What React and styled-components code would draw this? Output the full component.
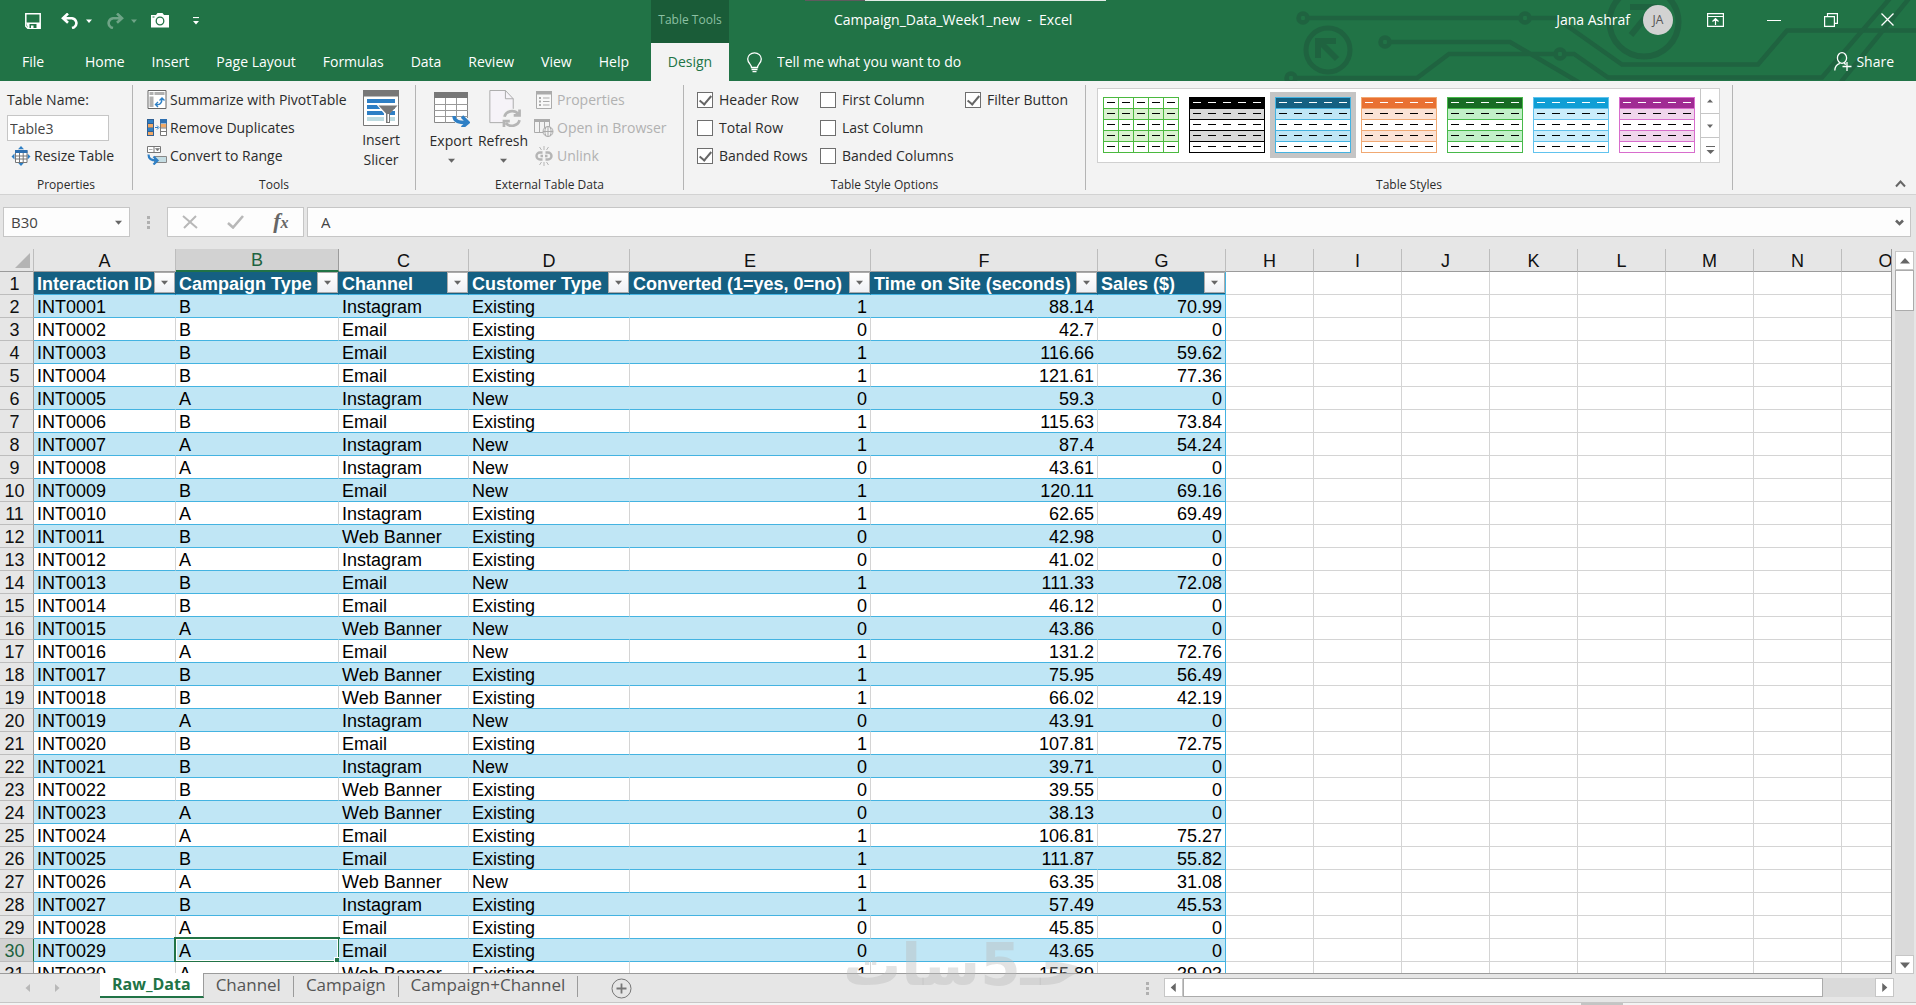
import { useState } from "react";
import styled, { createGlobalStyle, ThemeProvider } from "styled-components";

const theme = {
    colors: {
        brand: "#217346",
        brandDark: "#1a5c38",
        ribbon: "#f3f3f3",
        chrome: "#e6e6e6",
        line: "#c6c6c6",
        grid: "#d4d4d4",
        tableLine: "#44b3e1",
        band: "#c0e6f5",
        tableHead: "#156082",
        text: "#2b2b2b",
        muted: "#b1b1b1",
    },
    fonts: {
        ui: `"Open Sans", "Noto Sans", sans-serif`,
        cell: `"Liberation Sans", Arial, sans-serif`,
    },
};

const GlobalStyle = createGlobalStyle`
    * { box-sizing: border-box; }
    body { margin: 0; background: #e6e6e6; }
    button, input { font: inherit; color: inherit; margin: 0; }
    button { border: 0; padding: 0; background: none; white-space: nowrap; }
    svg { display: block; flex: none; }
`;

const Window = styled.div`
    display: flex;
    flex-direction: column;
    height: 100vh;
    overflow: hidden;
    position: relative;
    font-family: ${props => props.theme.fonts.ui};
    font-size: 14px;
    line-height: 20px;
    color: ${props => props.theme.colors.text};
    background: ${props => props.theme.colors.chrome};
`;

/* ---------- title bar and tabs ---------- */

const Header = styled.header`
    position: relative;
    display: flex;
    flex: none;
    height: 81px;
    color: #fff;
    background: ${props => props.theme.colors.brand};
    overflow: hidden;
`;
const Circuit = styled.svg`
    position: absolute;
    top: 0;
    right: 0;
`;
const WindowEdge = styled.div`
    position: absolute;
    top: 0;
    left: 42%;
    width: 301px;
    height: 1px;
    background: linear-gradient(to right, #5f5a5e 60px, #e3ebe6 60px);
`;
const HeaderColumn = styled.div`
    position: relative;
    display: flex;
    flex-direction: column;
    flex: ${props => props.grow ? 1 : "none"};
`;
const QuickAccess = styled.div`
    display: flex;
    align-items: center;
    gap: 14px;
    height: 43px;
    padding: 0 0 2px 25px;
`;
const QuickButton = styled.button`
    display: flex;
    align-items: center;
    gap: 7px;
    width: ${props => props.width};
    opacity: ${props => props.disabled ? 0.35 : 1};
`;
const TabList = styled.nav`
    display: flex;
    gap: 27px;
    height: 38px;
    padding: 0 22px;
`;
const Tab = styled.button`
    text-align: left;
    min-width: ${props => props.first ? "36px" : 0};
`;
const ContextTab = styled.div`
    position: relative;
    display: flex;
    flex-direction: column;
    flex: none;
    width: 78px;
    text-align: center;
`;
const ContextTitle = styled.div`
    height: 43px;
    padding-top: 10px;
    font-size: 12px;
    color: #8cc0a3;
    background: ${props => props.theme.colors.brandDark};
`;
const ActiveTab = styled.button`
    height: 38px;
    color: ${props => props.theme.colors.brand};
    background: ${props => props.theme.colors.ribbon};
`;
const TitleRow = styled.div`
    display: flex;
    align-items: center;
    height: 43px;
    padding: 0 22px 4px 105px;
`;
const DocTitle = styled.div`
    flex: 1;
    white-space: pre;
`;
const Avatar = styled.span`
    display: grid;
    place-items: center;
    width: 30px;
    height: 30px;
    margin: 0 34px 0 13px;
    border-radius: 50%;
    font-size: 12px;
    color: #555;
    background: #d2d2d2;
`;
const WindowButtons = styled.div`
    display: flex;
    align-items: center;
    gap: 43px;
`;
const TellRow = styled.div`
    display: flex;
    align-items: center;
    height: 38px;
    padding: 0 22px 0 17px;
`;
const TellMe = styled.input`
    flex: 1;
    margin-left: 12px;
    padding: 0 2px;
    border: 0;
    background: none;
    outline: 0;
    &::placeholder { color: #fff; opacity: 1; }
`;
const ShareButton = styled.button`
    display: flex;
    align-items: center;
    gap: 4px;
`;

/* ---------- ribbon ---------- */

const Ribbon = styled.section`
    display: flex;
    flex: none;
    height: 114px;
    padding: 4px 0;
    border-bottom: 1px solid #d2d2d2;
    background: ${props => props.theme.colors.ribbon};
`;
const Group = styled.div`
    display: flex;
    flex-direction: column;
    justify-content: space-between;
    flex: none;
    width: ${props => props.width}px;
    border-right: 1px solid #b4b4b4;
`;
const GroupBody = styled.div`
    display: flex;
    padding-left: ${props => props.inset}px;
`;
const GroupLabel = styled.div`
    line-height: 10px;
    font-size: 12px;
    text-align: center;
`;
const Stack = styled.div`
    display: flex;
    flex-direction: column;
    align-items: flex-start;
    margin-left: ${props => props.before || 0}px;
    width: ${props => props.width ? `${props.width}px` : "auto"};
`;
const Command = styled.button`
    display: flex;
    align-items: center;
    gap: 3px;
    height: 28px;
    padding-top: 1px;
    color: ${props => props.disabled ? props.theme.colors.muted : "inherit"};
    svg { width: 20px; }
`;
const BigCommand = styled.button`
    display: flex;
    flex-direction: column;
    align-items: center;
    width: ${props => props.width}px;
    padding-top: 5px;
    svg + span { margin-top: 4px; }
    span + svg { margin-top: 6px; }
`;
const FieldLabel = styled.label`
    height: 30px;
    line-height: 30px;
`;
const NameField = styled.input`
    width: 102px;
    height: 26px;
    padding: 0 2px;
    border: 1px solid ${props => props.theme.colors.line};
    color: #444;
    background: #fff;
`;
const ResizeCommand = styled(Command)`
    margin-left: 4px;
`;
const CheckLabel = styled.label`
    display: flex;
    align-items: center;
    gap: 6px;
    height: 28px;
    padding-top: 1px;
    white-space: nowrap;
`;
const CheckBox = styled.input`
    appearance: none;
    display: grid;
    place-items: center;
    width: 16px;
    height: 16px;
    border: 1px solid #6e6e6e;
    background: #fff;
    &:checked::after {
        content: "";
        width: 5px;
        height: 10px;
        margin-bottom: 3px;
        border: solid #666;
        border-width: 0 2px 2px 0;
        transform: rotate(40deg);
    }
`;
const Gallery = styled.div`
    display: flex;
    width: 623px;
    height: 75px;
    margin-top: 3px;
    border: 1px solid #d0d0d0;
    background: #fff;
`;
const GalleryItems = styled.div`
    display: flex;
    flex: 1;
    align-items: flex-start;
    padding-top: 3px;
`;
const Swatch = styled.button`
    display: grid;
    place-items: center;
    width: 86px;
    height: 66px;
    background: ${props => props.active ? "#c5c5c5" : "none"};
`;
const GalleryScroll = styled.div`
    display: flex;
    flex-direction: column;
    width: 19px;
    button {
        flex: 1;
        display: grid;
        place-items: center;
        border-left: 1px solid ${props => props.theme.colors.line};
    }
    button + button { border-top: 1px solid ${props => props.theme.colors.line}; }
`;
const RibbonEnd = styled.div`
    display: flex;
    flex: 1;
    justify-content: flex-end;
    align-items: flex-end;
    padding: 0 10px 2px 0;
`;

/* ---------- formula bar ---------- */

const FormulaBar = styled.div`
    display: flex;
    flex: none;
    align-items: center;
    height: 54px;
    padding: 0 5px 0 3px;
`;
const BarBox = styled.div`
    display: flex;
    align-items: center;
    justify-content: space-around;
    flex: ${props => props.width ? "none" : 1};
    width: ${props => props.width ? `${props.width}px` : "auto"};
    height: 30px;
    margin-right: ${props => props.after || 0}px;
    padding: 0 ${props => props.inset || 0}px;
    border: 1px solid ${props => props.theme.colors.line};
    background: #fdfdfd;
`;
const BarInput = styled.input`
    flex: 1;
    min-width: 0;
    padding: 0 0 0 ${props => props.inset || 0}px;
    border: 0;
    outline: 0;
    font-size: 15px;
    color: #444;
    background: none;
`;
const Grip = styled.div`
    align-self: center;
    flex: none;
    width: 3px;
    height: 13px;
    margin: 0 ${props => props.space}px;
    background: repeating-linear-gradient(#b0b0b0 0 3px, transparent 3px 5px);
`;
const Fx = styled.span`
    font-family: "Liberation Serif", serif;
    font-size: 22px;
    font-style: italic;
    font-weight: bold;
    color: #666;
    small { font-size: 16px; }
`;

/* ---------- sheet ---------- */

const SheetArea = styled.main`
    display: flex;
    flex: 1;
    min-height: 0;
`;
const SheetView = styled.div`
    flex: 1;
    min-width: 0;
    overflow: hidden;
    border-right: 1px solid #9b9b9b;
    border-bottom: 1px solid #9b9b9b;
`;
const Sheet = styled.table`
    table-layout: fixed;
    width: 1930px;
    border-collapse: separate;
    border-spacing: 0;
    font-family: ${props => props.theme.fonts.cell};
    font-size: 18px;
    line-height: 20px;
    color: #000;
    tr { height: 23px; }
`;
const ColumnHead = styled.th`
    height: 23px;
    padding: 2px 0 0;
    line-height: 19px;
    font-weight: normal;
    color: ${props => props.active ? "#1d6340" : "#111"};
    background: ${props => props.active ? "#d2d2d2" : props.theme.colors.chrome};
    border-right: 1px solid ${props => props.active ? "#9b9b9b" : "#bdbdbd"};
    border-bottom: ${props => props.active ? `2px solid ${props.theme.colors.brand}` : "1px solid #9b9b9b"};
`;
const Corner = styled(ColumnHead)`
    padding: 3px 3px 3px 15px;
`;
const RowHead = styled.th`
    padding: 2px 4px 0 0;
    font-weight: normal;
    color: ${props => props.active ? "#1d6340" : "#111"};
    background: ${props => props.active ? "#d2d2d2" : props.theme.colors.chrome};
    border-right: 1px solid ${props => props.active ? props.theme.colors.brand : "#9b9b9b"};
    border-bottom: 1px solid #bdbdbd;
`;
const Cell = styled.td`
    position: relative;
    padding: 2px 3px 0;
    white-space: nowrap;
    text-align: ${props => props.numeric ? "right" : "left"};
    background: ${props => props.band ? props.theme.colors.band : "#fff"};
    border-bottom: 1px solid ${props => props.theme.colors.tableLine};
    border-right: 1px solid ${props => props.last ? props.theme.colors.tableLine : props.band ? props.theme.colors.band : props.theme.colors.grid};
`;
const EmptyCell = styled.td`
    padding: 0;
    background: #fff;
    border-right: 1px solid ${props => props.theme.colors.grid};
    border-bottom: 1px solid ${props => props.theme.colors.grid};
`;
const FieldCell = styled.th`
    padding: 0;
    color: #fff;
    background: ${props => props.theme.colors.tableHead};
    border-bottom: 1px solid ${props => props.theme.colors.tableLine};
    border-right: 1px solid ${props => props.last ? props.theme.colors.tableLine : props.theme.colors.tableHead};
`;
const FieldInner = styled.div`
    display: flex;
    justify-content: space-between;
    padding-left: 3px;
    height: 22px;
    white-space: nowrap;
    span { min-width: 0; padding-top: 2px; }
`;
const FilterButton = styled.button`
    display: grid;
    place-items: center;
    flex: none;
    width: 21px;
    height: 21px;
    border: 1px solid #ababab;
    background: linear-gradient(#fff, #eef0f4);
`;
const Selection = styled.div`
    position: absolute;
    inset: -2px;
    border: 2px solid ${props => props.theme.colors.brand};
    box-shadow: inset 0 0 0 1px #fff;
    &::after {
        content: "";
        position: absolute;
        right: -3px;
        bottom: -3px;
        width: 6px;
        height: 6px;
        border: solid #fff;
        border-width: 1px 0 0 1px;
        background: ${props => props.theme.colors.brand};
    }
`;
const Scroller = styled.div`
    display: flex;
    flex: 0 1 730px;
    height: 19px;
    margin: 4px 22px 0 0;
    background: #dadada;
`;
const SideScroller = styled.div`
    display: flex;
    flex-direction: column;
    flex: none;
    width: 19px;
    margin: 2px 2px 0 3px;
    background: #dadada;
`;
const ScrollButton = styled.button`
    display: grid;
    place-items: center;
    flex: none;
    width: 19px;
    height: 19px;
    border: 1px solid ${props => props.theme.colors.line};
    background: #fff;
`;
const Thumb = styled.div`
    flex: none;
    width: ${props => props.vertical ? "19px" : "640px"};
    height: ${props => props.vertical ? "41px" : "19px"};
    border: 1px solid #ababab;
    background: #fff;
`;
const Spacer = styled.div`
    flex: 1;
`;

/* ---------- sheet tabs ---------- */

const BottomBar = styled.footer`
    display: flex;
    flex: none;
    height: 29px;
    border-bottom: 1px solid ${props => props.theme.colors.line};
    font-size: 17px;
`;
const SheetNav = styled.div`
    display: flex;
    gap: 21px;
    align-items: center;
    width: 100px;
    padding-left: 24px;
`;
const SheetTab = styled.button`
    position: relative;
    height: ${props => props.active ? "25px" : "21px"};
    margin-top: ${props => props.active ? "-1px" : "2px"};
    padding: 0 12px ${props => props.active ? 1 : 4}px;
    line-height: 17px;
    font-size: ${props => props.active ? 16 : 17}px;
    font-weight: ${props => props.active ? "bold" : "normal"};
    color: ${props => props.active ? props.theme.colors.brand : "#555"};
    background: ${props => props.active ? "#fff" : "none"};
    border: solid #9b9b9b;
    border-width: 0 1px 0 0;
    ${props => props.active && `border-bottom: 2px solid ${props.theme.colors.brand};`}
`;
const AddSheet = styled.button`
    margin-left: 33px;
`;
const StatusStrip = styled.div`
    flex: none;
    height: 2px;
    background: #f3f3f3;
`;
const StatusMark = styled.div`
    width: 42px;
    height: 2px;
    margin-left: auto;
    margin-right: 293px;
    background: #c3c5c4;
`;
const Watermark = styled.div`
    position: absolute;
    left: 44%;
    bottom: 10px;
    direction: rtl;
    font-family: "DejaVu Sans", sans-serif;
    font-weight: bold;
    font-size: 58px;
    line-height: 60px;
    color: rgba(185, 185, 185, 0.4);
    pointer-events: none;
`;

/* ---------- icons ---------- */

const Caret = ({ size = 7, color = "#666", dir = "down" }) => {
    const turn = { down: 0, up: 180, left: 90, right: 270 }[dir];
    return <svg width={size} height={size} viewBox="0 0 8 8"><path d="M0 2h8L4 6.500z" fill={color} transform={`rotate(${turn} 4 4)`} /></svg>
}
const SaveIcon = () => <svg width="16" height="16" viewBox="0 0 16 16" fill="none" stroke="#fff" strokeWidth="1.500">
    <path d="M.8.800h14.400v14.400H2.800l-2-2z" />
    <path d="M1 9.500h14V15H3z" fill="#fff" stroke="none" /><path d="M4.500 11h7v4h-7z" fill="#217346" stroke="none" /><path d="M6 12.500h2.500V16H6z" fill="#fff" stroke="none" />
</svg>
const UndoIcon = ({ flip }) => <svg width="18" height="16" viewBox="0 0 18 16" fill="none" stroke="#fff" strokeWidth="2.600">
    <g transform={flip ? "translate(18 0) scale(-1 1)" : ""}><path d="M7 .5L2 5.200l5 4.600M2.500 5.200h8.500a5 5 0 0 1 2 9.200l-2 .6" /></g>
</svg>
const CameraIcon = () => <svg width="18" height="15" viewBox="0 0 18 15">
    <path d="M0 2h5l1.500-2h5L13 2h5v12.500H0z" fill="#fff" /><circle cx="9" cy="8" r="3.800" fill="none" stroke="#217346" strokeWidth="1.300" /><path d="M1.500 4h2" stroke="#217346" />
</svg>
const CustomizeIcon = () => <svg width="6" height="8" viewBox="0 0 6 8"><path d="M0 .5h6" stroke="#fff" strokeWidth="1.200" /><path d="M0 4h6L3 7.500z" fill="#fff" /></svg>
const BulbIcon = () => <svg width="17" height="21" viewBox="0 0 17 21" fill="none" stroke="#fff" strokeWidth="1.300">
    <path d="M5.500 15.500c0-3-3.800-4.500-3.800-8.500a6.800 6.200 0 0 1 13.600 0c0 4-3.800 5.500-3.800 8.500zM5.500 17.500h6M6.500 19.700h4" />
</svg>
const ShareIcon = () => <svg width="18" height="20" viewBox="0 0 18 20" fill="none" stroke="#fff" strokeWidth="1.300">
    <ellipse cx="8" cy="6" rx="4.600" ry="5.300" /><path d="M.8 18.500c0-4 2-6 5-7.200M10 11.300l2 1M13 10v9M8.500 14.500h9" />
</svg>
const DisplayIcon = () => <svg width="17" height="14" viewBox="0 0 17 14" fill="none" stroke="#fff" strokeWidth="1.200">
    <path d="M.6.600h15.800v12.800H.6zM.6 3.500h15.800M8.500 12V6M5.500 8.500l3-3 3 3" />
</svg>
const MinIcon = () => <svg width="14" height="14" viewBox="0 0 14 14"><path d="M0 7.500h14" stroke="#fff" /></svg>
const RestoreIcon = () => <svg width="14" height="14" viewBox="0 0 14 14" fill="none" stroke="#fff" strokeWidth="1.200"><path d="M.6 3.600h9.800v9.800H.6zM3.500 3.500V.6h9.900v9.800h-3" /></svg>
const CloseIcon = () => <svg width="13" height="13" viewBox="0 0 13 13"><path d="M.5.500l12 12M12.500.500l-12 12" stroke="#fff" strokeWidth="1.300" /></svg>

const ResizeIcon = () => <svg width="19" height="20" viewBox="0 0 19 20">
    <path d="M9.500 0l3 3.200h-6zM9.500 20l3-3.200h-6zM0 10.500l3-3v6zM19 10.500l-3-3v6z" fill="#2e7fc5" />
    <path d="M4 4.500h11.500v12H4z" fill="#fff" stroke="#777" /><path d="M3.500 4h12.500v3H3.500z" fill="#2e6fb0" />
    <path d="M4 10h11.500M4 13h11.500M8 7v9.500M11.700 7v9.500" stroke="#777" />
</svg>
const PivotIcon = () => <svg width="19" height="19" viewBox="0 0 19 19">
    <path d="M.5.500h18v18H.5z" fill="#fff" stroke="#666" />
    <path d="M2 2h4v3H2zM7 2h10v3H7zM2 6.500h4V17H2z" fill="#b0b0b0" />
    <path d="M8.500 14.500c4 .8 6-1.500 6-6M12 10.500l2.500-2.500L17 10.500M10.500 12L8 14.500l2.500 2.500" fill="none" stroke="#2e7fc5" strokeWidth="1.400" />
</svg>
const DuplicatesIcon = () => <svg width="20" height="17" viewBox="0 0 20 17">
    <path d="M0 0h7v17H0z" fill="#2f5f93" /><path d="M1 1h5v3H1zM1 9h5v3H1z" fill="#2e7fc5" /><path d="M1 5h5v3.500H1zM1 13h5v3H1z" fill="#f0a966" />
    <path d="M8 8.500h3M10 6.500l2 2-2 2" stroke="#2e7fc5" fill="none" />
    <path d="M13.500.500h6v16h-6z" fill="#fff" stroke="#777" /><path d="M13 0h7v4.500h-7z" fill="#2e6fb0" /><path d="M14 5h5v3.500h-5z" fill="#f0a966" />
    <path d="M13 9h7M13 12.500h7" stroke="#777" />
</svg>
const RangeIcon = () => <svg width="20" height="19" viewBox="0 0 20 19">
    <path d="M.5.500h13v6H.5zM7 .5v6" fill="#fff" stroke="#777" /><path d="M2 3.500h3.500M8.500 2.500h4L10.500 5z" fill="#777" stroke="#777" strokeWidth=".6" />
    <path d="M7.500 10.500h12v6h-12z" fill="#c5dde3" stroke="#888" />
    <path d="M1.500 8.500c0 4 3 6 8 6M6.500 10.500l4 4-4 4" fill="none" stroke="#2e7fc5" strokeWidth="2.200" />
</svg>
const SlicerIcon = () => <svg width="36" height="36" viewBox="0 0 36 36">
    <path d="M.5.500h35v35H.5z" fill="#fff" stroke="#777" /><path d="M0 0h36v6.500H0z" fill="#777" />
    <path d="M4 9h28v4H4zM4 15h28v4H4zM4 21h28v4H4z" fill="#2e7fc5" /><path d="M4 27h28v4H4z" fill="#bddbe0" />
    <path d="M13 14h22.500l-9 9.500V34h-5.500V23.500z" fill="#fff" /><path d="M15.500 15.500h19l-7.500 8V33h-4v-9.500z" fill="#777" /><path d="M24.500 24h1.500v8h-1.500z" fill="#fff" />
</svg>
const ExportIcon = () => <svg width="38" height="37" viewBox="0 0 38 37">
    <path d="M2.500 2.500h33v30h-33z" fill="#fff" stroke="#888" /><path d="M2 2h34v6H2z" fill="#777" />
    <path d="M2 14.500h34M2 20.500h34M2 26.500h34M13.500 8v25M24.500 8v25" stroke="#999" />
    <path d="M23 28h14v8H23z" fill="#f3f3f3" />
    <path d="M22 26c0 5.500 5 6.500 13 6.500M30 26.500l6 6-6 5" fill="none" stroke="#2e7fc5" strokeWidth="3.400" />
</svg>
const RefreshIcon = () => <svg width="36" height="37" viewBox="0 0 36 38">
    <path d="M4.500.500h16l8 8.500v24.500h-24z" fill="#f6f3f8" stroke="#ababab" /><path d="M20.500.500V9h8" fill="none" stroke="#ababab" />
    <circle cx="27" cy="29" r="10" fill="#f3f3f3" />
    <path d="M19.500 27.500a8 7.500 0 0 1 14-3M35 20v6h-6M35 31a8 7.500 0 0 1-14 3M19 38v-6h6" fill="none" stroke="#b5b5b5" strokeWidth="2.800" />
</svg>
const PropsIcon = () => <svg width="18" height="18" viewBox="0 0 18 18">
    <path d="M1.500.500h15v17h-15z" fill="#f8f8f8" stroke="#ababab" /><path d="M1 0h16v3.500H1z" fill="#ababab" />
    <path d="M8 7h6.500M8 10.500h6.500M8 14h6.500" stroke="#ababab" /><path d="M4 7h2M4 10.500h2M4 14h2" stroke="#ababab" strokeWidth="2" />
</svg>
const BrowserIcon = () => <svg width="20" height="18" viewBox="0 0 20 18" fill="none" stroke="#ababab">
    <path d="M.5.500h15v13H.5zM5.500 2v11.500M10.500 2v11.500" /><path d="M0 1.500h16" strokeWidth="3" />
    <circle cx="14" cy="12.500" r="5" fill="#f3f3f3" /><path d="M9 12.500h10M14 7.500v10M12 8c-1.500 3-1.500 6 0 9M16 8c1.500 3 1.500 6 0 9" />
</svg>
const UnlinkIcon = () => <svg width="18" height="20" viewBox="0 0 18 20" fill="none" stroke="#b5b5b5">
    <path d="M7.500 6.500H5a3.500 3.500 0 0 0 0 7h2.500M10.500 6.500H13a3.500 3.500 0 0 1 0 7h-2.500M5.500 10h2.500M10 10h2.500" strokeWidth="2.400" />
    <path d="M9 0v4M4.500 1l2 3M13.500 1l-2 3M9 20v-4M4.500 19l2-3M13.500 19l-2-3" />
</svg>
const CancelIcon = () => <svg width="16" height="14" viewBox="0 0 16 14"><path d="M1 1l14 12M14 1L2 13" stroke="#b8b8b8" strokeWidth="2" /></svg>
const EnterIcon = () => <svg width="17" height="14" viewBox="0 0 17 14"><path d="M1 8l5 4.500L16 1" fill="none" stroke="#b8b8b8" strokeWidth="2.600" /></svg>
const ChevronIcon = ({ up }) => up
    ? <svg width="11" height="8" viewBox="0 0 11 8"><path d="M1 6.500l4.500-5 4.500 5" fill="none" stroke="#666" strokeWidth="2" /></svg>
    : <svg width="9" height="7" viewBox="0 0 9 7"><path d="M1 1.500l3.500 3.500L8 1.500" fill="none" stroke="#666" strokeWidth="2.600" /></svg>
const PlusIcon = () => <svg width="21" height="21" viewBox="0 0 21 21" fill="none" stroke="#777"><circle cx="10.500" cy="10.500" r="9.500" /><path d="M5.500 10.500h10M10.500 5.500v10" strokeWidth="1.800" /></svg>

const CircuitArt = () => <Circuit width="636" height="81" viewBox="0 0 636 81" fill="none" stroke="#1f6340" strokeWidth="4.500">
    <circle cx="23" cy="18" r="4.500" /><circle cx="245" cy="18" r="4.500" /><circle cx="105" cy="42" r="4.500" />
    <circle cx="280" cy="54" r="4.500" /><circle cx="11" cy="78" r="4.500" />
    <path d="M28 18h212M250 18h26l66 46.500h136L507 30.500h129" />
    <path d="M110 42h120l70 41M16 78h121l32-24h106M285 54h9l34 23.500h214L612-4M561 82l70-86" />
    <circle cx="48" cy="50" r="22" strokeWidth="5" />
    <path d="M38 58V41h18M40 42l17 17" strokeWidth="6" />
    <ellipse cx="364" cy="22" rx="34.500" ry="34.500" strokeWidth="6" />
    <path d="M350 7h24v20M373 8l-22 27" strokeWidth="6" />
</Circuit>

/* one preview tile: header row and four banded rows */
const StyleTile = ({ head, line, band, columns }) => {
    const rows = [0, 1, 2, 3, 4];
    return <svg width="76" height="56" viewBox="0 0 76 56" shapeRendering="crispEdges">
        <rect width="76" height="56" fill="#fff" />
        {rows.map(row => {
            const fill = row === 0 ? head : row % 2 ? band : "#fff";
            return <g key={row}>
                <rect x="0.500" y={row * 11 + 0.5} width="75" height="11" fill={fill} stroke={line} />
                <path d={`M4 ${row * 11 + 5.5}h68`} stroke={row === 0 && !columns ? "#fff" : "#000"} strokeDasharray="8 7" />
            </g>
        })}
        {columns && [15, 30, 45, 60].map(x => <path key={x} d={`M${x}.5 0v56`} stroke={line} />)}
    </svg>
}

/* ---------- data ---------- */

const tabs = ["File", "Home", "Insert", "Page Layout", "Formulas", "Data", "Review", "View", "Help"];

const tableStyles = [
    { name: "Light green", head: "#fff", line: "#4bb93f", band: "#daf2d0", columns: true },
    { name: "Black", head: "#000", line: "#000", band: "#d9d9d9" },
    { name: "Blue", head: "#156082", line: "#44b3e1", band: "#c0e6f5" },
    { name: "Orange", head: "#e97132", line: "#f1a973", band: "#fbe2d5" },
    { name: "Green", head: "#196b24", line: "#47b94a", band: "#c1f0c8" },
    { name: "Sky", head: "#0f9ed5", line: "#61c3ee", band: "#caedfb" },
    { name: "Purple", head: "#a02b93", line: "#d86dcd", band: "#f0d5ec" },
];

const options = [
    { width: 123, items: [["Header Row", true], ["Total Row", false], ["Banded Rows", true]] },
    { width: 145, items: [["First Column", false], ["Last Column", false], ["Banded Columns", false]] },
    { width: 110, items: [["Filter Button", true]] },
];

const columns = [
    ["A", 142], ["B", 163], ["C", 130], ["D", 161], ["E", 241], ["F", 227], ["G", 128],
    ["H", 88], ["I", 88], ["J", 88], ["K", 88], ["L", 88], ["M", 88], ["N", 88], ["O", 88],
];

const fields = ["Interaction ID", "Campaign Type", "Channel", "Customer Type", "Converted (1=yes, 0=no)", "Time on Site (seconds)", "Sales ($)"];

const records = [
    ["INT0001", "B", "Instagram", "Existing", 1, 88.14, 70.99],
    ["INT0002", "B", "Email", "Existing", 0, 42.7, 0],
    ["INT0003", "B", "Email", "Existing", 1, 116.66, 59.62],
    ["INT0004", "B", "Email", "Existing", 1, 121.61, 77.36],
    ["INT0005", "A", "Instagram", "New", 0, 59.3, 0],
    ["INT0006", "B", "Email", "Existing", 1, 115.63, 73.84],
    ["INT0007", "A", "Instagram", "New", 1, 87.4, 54.24],
    ["INT0008", "A", "Instagram", "New", 0, 43.61, 0],
    ["INT0009", "B", "Email", "New", 1, 120.11, 69.16],
    ["INT0010", "A", "Instagram", "Existing", 1, 62.65, 69.49],
    ["INT0011", "B", "Web Banner", "Existing", 0, 42.98, 0],
    ["INT0012", "A", "Instagram", "Existing", 0, 41.02, 0],
    ["INT0013", "B", "Email", "New", 1, 111.33, 72.08],
    ["INT0014", "B", "Email", "Existing", 0, 46.12, 0],
    ["INT0015", "A", "Web Banner", "New", 0, 43.86, 0],
    ["INT0016", "A", "Email", "New", 1, 131.2, 72.76],
    ["INT0017", "B", "Web Banner", "Existing", 1, 75.95, 56.49],
    ["INT0018", "B", "Web Banner", "Existing", 1, 66.02, 42.19],
    ["INT0019", "A", "Instagram", "New", 0, 43.91, 0],
    ["INT0020", "B", "Email", "Existing", 1, 107.81, 72.75],
    ["INT0021", "B", "Instagram", "New", 0, 39.71, 0],
    ["INT0022", "B", "Web Banner", "Existing", 0, 39.55, 0],
    ["INT0023", "A", "Web Banner", "Existing", 0, 38.13, 0],
    ["INT0024", "A", "Email", "Existing", 1, 106.81, 75.27],
    ["INT0025", "B", "Email", "Existing", 1, 111.87, 55.82],
    ["INT0026", "A", "Web Banner", "New", 1, 63.35, 31.08],
    ["INT0027", "B", "Instagram", "Existing", 1, 57.49, 45.53],
    ["INT0028", "A", "Email", "Existing", 0, 45.85, 0],
    ["INT0029", "A", "Email", "Existing", 0, 43.65, 0],
    ["INT0030", "A", "Web Banner", "Existing", 1, 155.89, 39.03],
];

const sheets = ["Raw_Data", "Channel", "Campaign", "Campaign+Channel"];

/* ---------- page parts ---------- */

const TopBar = () => {
    return <Header>
        <CircuitArt />
        <WindowEdge />
        <HeaderColumn>
            <QuickAccess>
                <QuickButton width="22px" aria-label="Save"><SaveIcon /></QuickButton>
                <QuickButton aria-label="Undo"><UndoIcon /><Caret size={6} color="#fff" /></QuickButton>
                <QuickButton disabled aria-label="Redo"><UndoIcon flip /><Caret size={6} color="#fff" /></QuickButton>
                <QuickButton width="28px" aria-label="Camera"><CameraIcon /></QuickButton>
                <QuickButton aria-label="Customize toolbar"><CustomizeIcon /></QuickButton>
            </QuickAccess>
            <TabList>
                {tabs.map((name, i) => <Tab key={name} first={i === 0 ? 1 : undefined}>{name}</Tab>)}
            </TabList>
        </HeaderColumn>
        <ContextTab>
            <ContextTitle>Table Tools</ContextTitle>
            <ActiveTab>Design</ActiveTab>
        </ContextTab>
        <HeaderColumn grow={1}>
            <TitleRow>
                <DocTitle>{"Campaign_Data_Week1_new  -  Excel"}</DocTitle>
                <span>Jana Ashraf</span>
                <Avatar>JA</Avatar>
                <WindowButtons>
                    <button aria-label="Ribbon display"><DisplayIcon /></button>
                    <button aria-label="Minimize"><MinIcon /></button>
                    <button aria-label="Restore"><RestoreIcon /></button>
                    <button aria-label="Close"><CloseIcon /></button>
                </WindowButtons>
            </TitleRow>
            <TellRow>
                <BulbIcon />
                <TellMe aria-label="Tell me" placeholder="Tell me what you want to do" />
                <ShareButton><ShareIcon />Share</ShareButton>
            </TellRow>
        </HeaderColumn>
    </Header>
}

const RibbonBar = () => {
    const [style, setStyle] = useState("Blue");
    return <Ribbon>
        <Group width={133}>
            <GroupBody inset={7}>
                <Stack>
                    <FieldLabel htmlFor="table-name">Table Name:</FieldLabel>
                    <NameField id="table-name" defaultValue="Table3" />
                    <ResizeCommand><ResizeIcon />Resize Table</ResizeCommand>
                </Stack>
            </GroupBody>
            <GroupLabel>Properties</GroupLabel>
        </Group>
        <Group width={283}>
            <GroupBody inset={14}>
                <Stack width={206}>
                    <Command><PivotIcon />Summarize with PivotTable</Command>
                    <Command><DuplicatesIcon />Remove Duplicates</Command>
                    <Command><RangeIcon />Convert to Range</Command>
                </Stack>
                <BigCommand width={56}><SlicerIcon /><span>Insert<br />Slicer</span></BigCommand>
            </GroupBody>
            <GroupLabel>Tools</GroupLabel>
        </Group>
        <Group width={268}>
            <GroupBody inset={9}>
                <BigCommand width={52}><ExportIcon /><span>Export</span><Caret size={7} /></BigCommand>
                <BigCommand width={52}><RefreshIcon /><span>Refresh</span><Caret size={7} /></BigCommand>
                <Stack before={5}>
                    <Command disabled><PropsIcon />Properties</Command>
                    <Command disabled><BrowserIcon />Open in Browser</Command>
                    <Command disabled><UnlinkIcon />Unlink</Command>
                </Stack>
            </GroupBody>
            <GroupLabel>External Table Data</GroupLabel>
        </Group>
        <Group width={402}>
            <GroupBody inset={13}>
                {options.map(({ width, items }) => <Stack key={width} width={width}>
                    {items.map(([name, on]) => <CheckLabel key={name}><CheckBox type="checkbox" defaultChecked={on} />{name}</CheckLabel>)}
                </Stack>)}
            </GroupBody>
            <GroupLabel>Table Style Options</GroupLabel>
        </Group>
        <Group width={647}>
            <GroupBody inset={11}>
                <Gallery>
                    <GalleryItems>
                        {tableStyles.map(item => <Swatch key={item.name} aria-label={item.name} active={item.name === style ? 1 : undefined} onClick={() => setStyle(item.name)}>
                            <StyleTile {...item} />
                        </Swatch>)}
                    </GalleryItems>
                    <GalleryScroll>
                        <button aria-label="Previous styles"><Caret size={6} dir="up" /></button>
                        <button aria-label="Next styles"><Caret size={6} /></button>
                        <button aria-label="More styles"><svg width="9" height="9" viewBox="0 0 9 9"><path d="M0 .500h9" stroke="#666" /><path d="M.5 4h8l-4 4z" fill="#666" /></svg></button>
                    </GalleryScroll>
                </Gallery>
            </GroupBody>
            <GroupLabel>Table Styles</GroupLabel>
        </Group>
        <RibbonEnd><button aria-label="Collapse ribbon"><ChevronIcon up /></button></RibbonEnd>
    </Ribbon>
}

const Formula = () => {
    return <FormulaBar>
        <BarBox width={127} inset={7}>
            <BarInput aria-label="Name box" defaultValue="B30" />
            <button aria-label="Open name list"><Caret size={7} /></button>
        </BarBox>
        <Grip space={17} />
        <BarBox width={137} after={3}>
            <button aria-label="Cancel"><CancelIcon /></button>
            <button aria-label="Enter"><EnterIcon /></button>
            <button aria-label="Insert function"><Fx>f<small>x</small></Fx></button>
        </BarBox>
        <BarBox inset={6}>
            <BarInput aria-label="Formula" inset={7} defaultValue="A" />
            <button aria-label="Expand formula bar"><ChevronIcon /></button>
        </BarBox>
    </FormulaBar>
}

const Grid = () => {
    const blanks = columns.slice(fields.length);
    return <Sheet>
        <colgroup>
            <col width="34" />
            {columns.map(([name, width]) => <col key={name} width={width} />)}
        </colgroup>
        <thead>
            <tr>
                <Corner><svg width="15" height="15" viewBox="0 0 15 15"><path d="M15 0v15H0z" fill="#b4b4b4" /></svg></Corner>
                {columns.map(([name]) => <ColumnHead key={name} active={name === "B" ? 1 : undefined}>{name}</ColumnHead>)}
            </tr>
        </thead>
        <tbody>
            <tr>
                <RowHead>1</RowHead>
                {fields.map((name, i) => <FieldCell key={name} last={i === 6 ? 1 : undefined}>
                    <FieldInner><span>{name}</span><FilterButton aria-label={`Filter ${name}`}><Caret /></FilterButton></FieldInner>
                </FieldCell>)}
                {blanks.map(([name]) => <EmptyCell key={name} />)}
            </tr>
            {records.map((record, r) => {
                const selected = r === 28;
                return <tr key={record[0]}>
                    <RowHead active={selected ? 1 : undefined}>{r + 2}</RowHead>
                    {record.map((value, i) => <Cell key={i} numeric={i > 3 ? 1 : undefined} last={i === 6 ? 1 : undefined} band={r % 2 === 0 ? 1 : undefined}>
                        {value}
                        {selected && i === 1 && <Selection />}
                    </Cell>)}
                    {blanks.map(([name]) => <EmptyCell key={name} />)}
                </tr>
            })}
        </tbody>
    </Sheet>
}

const SheetBar = () => {
    const [current, setCurrent] = useState(sheets[0]);
    return <BottomBar>
        <SheetNav>
            <button aria-label="Previous sheet"><Caret size={8} color="#b8b8b8" dir="left" /></button>
            <button aria-label="Next sheet"><Caret size={8} color="#b8b8b8" dir="right" /></button>
        </SheetNav>
        {sheets.map(name => <SheetTab key={name} active={name === current ? 1 : undefined} onClick={() => setCurrent(name)}>{name}</SheetTab>)}
        <AddSheet aria-label="New sheet"><PlusIcon /></AddSheet>
        <Spacer />
        <Grip space={15} />
        <Scroller>
            <ScrollButton aria-label="Scroll left"><Caret size={9} dir="left" /></ScrollButton>
            <Thumb />
            <Spacer />
            <ScrollButton aria-label="Scroll right"><Caret size={9} dir="right" /></ScrollButton>
        </Scroller>
    </BottomBar>
}

const App = () => {
    return <ThemeProvider theme={theme}>
        <GlobalStyle />
        <Window>
            <TopBar />
            <RibbonBar />
            <Formula />
            <SheetArea>
                <SheetView><Grid /></SheetView>
                <SideScroller>
                    <ScrollButton aria-label="Scroll up"><Caret size={10} dir="up" /></ScrollButton>
                    <Thumb vertical={1} />
                    <Spacer />
                    <ScrollButton aria-label="Scroll down"><Caret size={10} /></ScrollButton>
                </SideScroller>
            </SheetArea>
            <SheetBar />
            <StatusStrip><StatusMark /></StatusStrip>
            <Watermark>خـ5سات</Watermark>
        </Window>
    </ThemeProvider>
}

export default App;
